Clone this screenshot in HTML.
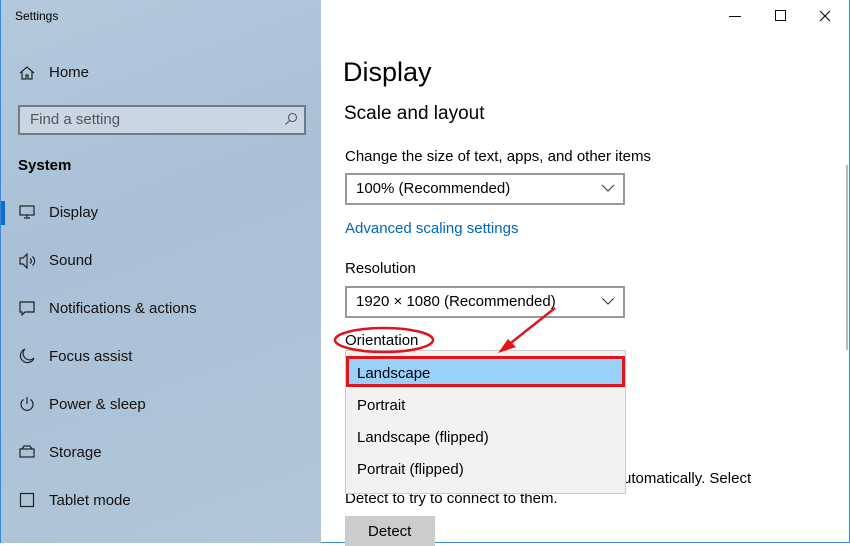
<!DOCTYPE html>
<html><head><style>
*{margin:0;padding:0;box-sizing:border-box}
body{width:850px;height:543px;overflow:hidden;font-family:"Liberation Sans",sans-serif;background:#fff;position:relative}
.side{position:absolute;left:0;top:0;width:321px;height:543px;background:linear-gradient(160deg,#b4c9dc 0%,#a9c0d6 40%,#b2c6d8 100%);border-left:1px solid #3c8ad6}
.t{position:absolute;color:#000;white-space:nowrap}
.main{position:absolute;left:321px;top:0;width:529px;height:543px;background:#fff;border-right:1px solid #3c8ad6;border-bottom:1px solid #3c8ad6}
.nav{position:absolute;left:48px;font-size:15px;color:#111}
.ic{position:absolute;left:18px}
.sel{position:absolute;width:280px;height:32px;border:2px solid #999;background:#fff}
</style></head><body>
<div class="side">
<div class="t" style="left:14px;top:9px;font-size:12px">Settings</div>
<svg class="ic" style="top:65px" width="16" height="16" viewBox="0 0 16 16" fill="none" stroke="#222" stroke-width="1.2"><path d="M1 8L8 2l7 6M3 6.5V14h4v-4h2v4h4V6.5"/></svg>
<div class="nav" style="top:64px">Home</div>
<div style="position:absolute;left:17px;top:105px;width:288px;height:30px;border:2px solid #6f7c88;background:#c9d7e4"></div>
<div class="t" style="left:29px;top:111px;font-size:15px;color:#555">Find a setting</div>
<svg style="position:absolute;left:283px;top:112px" width="14" height="14" viewBox="0 0 14 14" fill="none" stroke="#555" stroke-width="1.1"><circle cx="8.5" cy="5.5" r="4"/><path d="M5.5 8.5L1.5 12.5"/></svg>
<div class="t" style="left:17px;top:157px;font-size:15px;font-weight:bold">System</div>
<div style="position:absolute;left:0;top:201px;width:4px;height:24px;background:#0a6fd1"></div>
<svg class="ic" style="top:205px" width="16" height="14" viewBox="0 0 16 14" fill="none" stroke="#222" stroke-width="1.2"><rect x="1" y="1" width="14" height="9"/><path d="M8 10v2M5 13h6"/></svg>
<div class="nav" style="top:204px">Display</div>
<svg class="ic" style="top:253px" width="18" height="16" viewBox="0 0 18 16" fill="none" stroke="#222" stroke-width="1.2"><path d="M1 5h3l4-4v14l-4-4H1z"/><path d="M11 5.5a3 3 0 0 1 0 5M13.5 3.5a6 6 0 0 1 0 9"/></svg>
<div class="nav" style="top:252px">Sound</div>
<svg class="ic" style="top:301px" width="16" height="15" viewBox="0 0 16 15" fill="none" stroke="#222" stroke-width="1.2"><path d="M1 1h14v10H6l-3 3v-3H1z"/></svg>
<div class="nav" style="top:300px">Notifications &amp; actions</div>
<svg class="ic" style="top:348px" width="16" height="16" viewBox="0 0 16 16" fill="none" stroke="#222" stroke-width="1.2"><path d="M6 1a7 7 0 1 0 9 9A6 6 0 0 1 6 1z"/></svg>
<div class="nav" style="top:348px">Focus assist</div>
<svg class="ic" style="top:396px" width="16" height="16" viewBox="0 0 16 16" fill="none" stroke="#222" stroke-width="1.2"><path d="M8 1v7M4.5 3.5a6 6 0 1 0 7 0"/></svg>
<div class="nav" style="top:396px">Power &amp; sleep</div>
<svg class="ic" style="top:445px" width="16" height="14" viewBox="0 0 16 14" fill="none" stroke="#222" stroke-width="1.2"><rect x="1" y="4" width="14" height="8"/><path d="M3 4l2-3h6l2 3"/></svg>
<div class="nav" style="top:444px">Storage</div>
<svg class="ic" style="top:492px" width="16" height="16" viewBox="0 0 16 16" fill="none" stroke="#222" stroke-width="1.2"><rect x="1.5" y="1.5" width="13" height="13"/></svg>
<div class="nav" style="top:492px">Tablet mode</div>
</div>
<div class="main">
<div style="position:absolute;left:408px;top:16px;width:12px;height:1px;background:#111"></div>
<div style="position:absolute;left:454px;top:10px;width:11px;height:11px;border:1px solid #111"></div>
<svg style="position:absolute;left:498px;top:10px" width="12" height="12" viewBox="0 0 12 12" stroke="#111" stroke-width="1.2"><path d="M1 1l10 10M11 1L1 11"/></svg>
<div class="t" style="left:22px;top:57px;font-size:27px">Display</div>
<div class="t" style="left:23px;top:103px;font-size:19px">Scale and layout</div>
<div class="t" style="left:24px;top:148px;font-size:15px">Change the size of text, apps, and other items</div>
<div class="sel" style="left:24px;top:173px"></div>
<div class="t" style="left:35px;top:180px;font-size:15px">100% (Recommended)</div>
<div class="t" style="left:24px;top:220px;font-size:15px;color:#0067b8">Advanced scaling settings</div>
<div class="t" style="left:24px;top:260px;font-size:15px">Resolution</div>
<div class="sel" style="left:24px;top:286px"></div>
<div class="t" style="left:35px;top:293px;font-size:15px">1920 × 1080 (Recommended)</div>
<svg style="position:absolute;left:280px;top:184px" width="14" height="9" viewBox="0 0 14 9" fill="none" stroke="#444" stroke-width="1.2"><path d="M1 1l6 6 6-6"/></svg>
<svg style="position:absolute;left:280px;top:297px" width="14" height="9" viewBox="0 0 14 9" fill="none" stroke="#444" stroke-width="1.2"><path d="M1 1l6 6 6-6"/></svg>
<div class="t" style="left:24px;top:332px;font-size:15px">Orientation</div>
<div class="t" style="left:302px;top:470px;font-size:15px">utomatically. Select</div>
<div class="t" style="left:24px;top:490px;font-size:15px">Detect to try to connect to them.</div>
<div style="position:absolute;left:24px;top:516px;width:90px;height:30px;background:#ccc"></div>
<div class="t" style="left:47px;top:523px;font-size:15px">Detect</div>
<div style="position:absolute;left:525px;top:165px;width:2px;height:185px;background:#bbb"></div>
<div style="position:absolute;left:24px;top:350px;width:281px;height:144px;background:#f2f2f2;border:1px solid #ccc"></div>
<div style="position:absolute;left:25px;top:356px;width:279px;height:31px;background:#99d1fb;border:3px solid #e0141b"></div>
<div class="t" style="left:36px;top:365px;font-size:15px">Landscape</div>
<div class="t" style="left:36px;top:397px;font-size:15px">Portrait</div>
<div class="t" style="left:36px;top:429px;font-size:15px">Landscape (flipped)</div>
<div class="t" style="left:36px;top:461px;font-size:15px">Portrait (flipped)</div>
<svg style="position:absolute;left:0;top:300px" width="300" height="60" fill="none" stroke="#e0141b" stroke-width="2.5"><ellipse cx="63" cy="40" rx="49" ry="12"/><path d="M234 8L186 46"/><path d="M177 53l18-6-8-8z" fill="#e0141b" stroke="none"/></svg>
</div>
</body></html>
